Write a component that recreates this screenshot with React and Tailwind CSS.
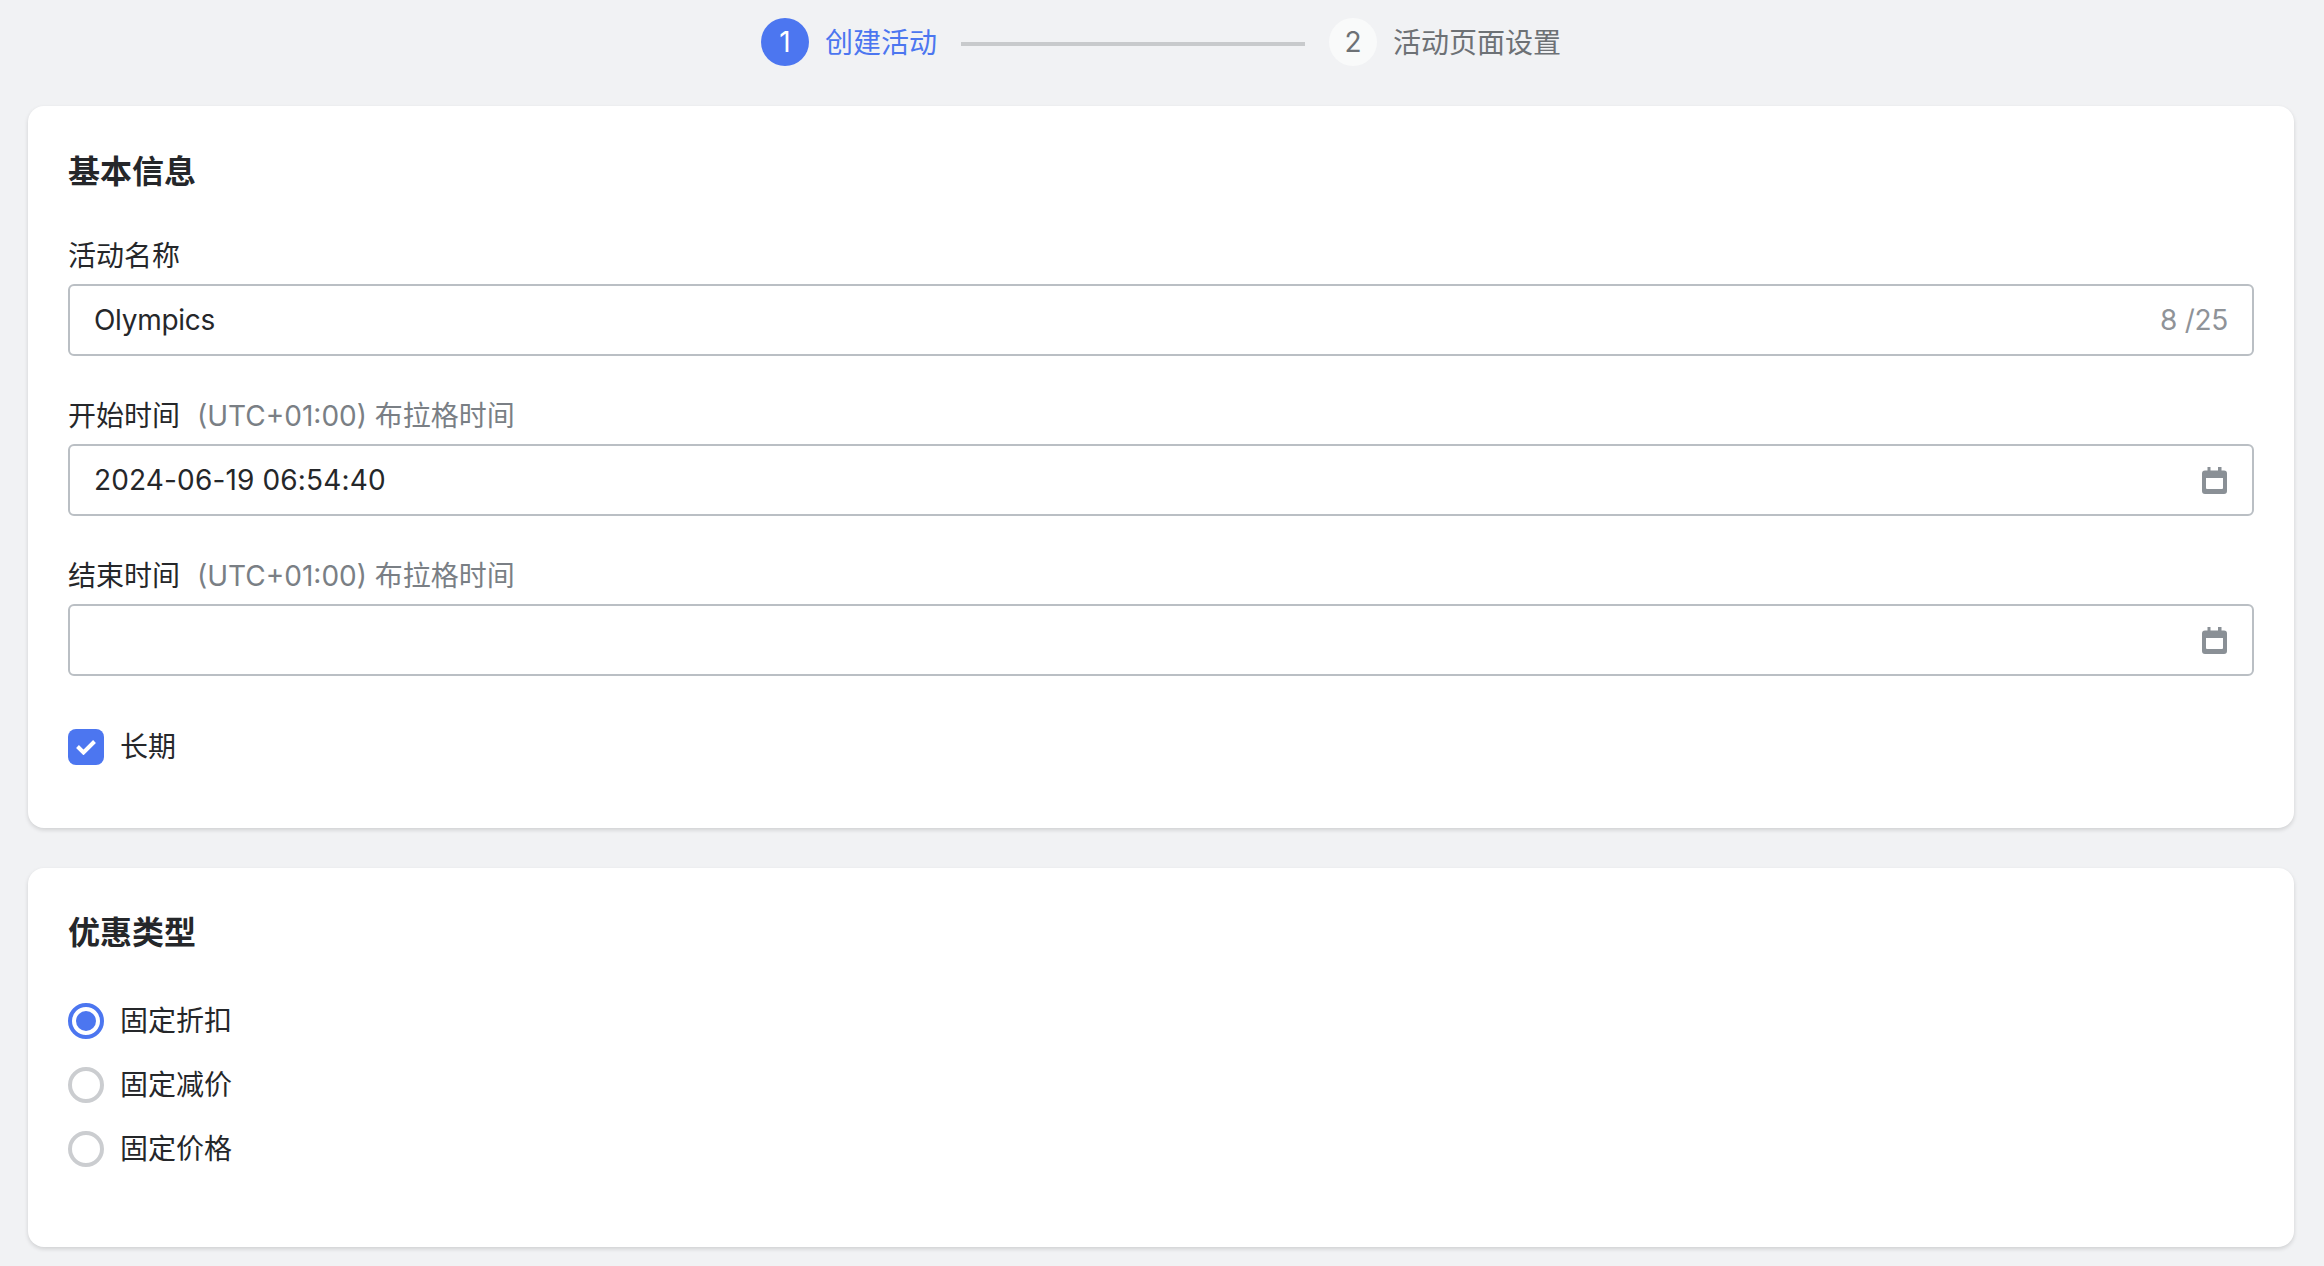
const FONT = "font-['Inter','Noto_Sans_CJK_SC',sans-serif]";

const CalendarIcon = () => (
  <svg width="25" height="27" viewBox="0 0 25 27" className="shrink-0 text-[#8a9096]">
    <path
      fill="currentColor"
      fillRule="evenodd"
      d="M5.5 0h3v3.5H16V0h3.5v3.5H22a3 3 0 0 1 3 3V24a3 3 0 0 1-3 3H3a3 3 0 0 1-3-3V6.5a3 3 0 0 1 3-3h2.5zM4 11v10a1 1 0 0 0 1 1h15a1 1 0 0 0 1-1V11z"
    />
  </svg>
);

const Field = ({ label, hint, value, valueClass, suffix, icon }) => (
  <div className="mb-[40px]">
    <div className="mb-[8px] flex h-[40px] items-center text-[28px] text-[#25272a]">
      <span>{label}</span>
      {hint && <span className="ml-[17px] text-[#7a7f85]">{hint}</span>}
    </div>
    <div className="flex h-[72px] items-center justify-between rounded-[6px] border-2 border-[#babfc4] bg-white pl-[24px] pr-[25px]">
      <span className={`text-[28px] text-[#25272a] ${valueClass}`}>{value}</span>
      {suffix && <span className="-mr-[1px] text-[28px] tracking-[-0.3px] text-[#8f9398]">{suffix}</span>}
      {icon && <span className="ml-auto flex"><CalendarIcon /></span>}
    </div>
  </div>
);

const Radio = ({ label, checked }) => (
  <div className="flex h-[36px] items-center gap-[16px]">
    {checked ? (
      <span className="flex h-[36px] w-[36px] items-center justify-center rounded-full border-4 border-[#4c76f0]">
        <span className="h-[20px] w-[20px] rounded-full bg-[#4c76f0]" />
      </span>
    ) : (
      <span className="h-[36px] w-[36px] rounded-full border-4 border-[#cbcdd0]" />
    )}
    <span className="text-[28px] text-[#25272a]">{label}</span>
  </div>
);

const App = () => {
  return (
    <div className={`min-h-screen overflow-hidden bg-[#f1f2f4] pb-[19px] pl-[28px] pr-[30px] pt-[18px] ${FONT}`}>
      <div className="mb-[40px] flex h-[48px] items-center justify-center">
        <span className="flex h-[48px] w-[48px] items-center justify-center rounded-full bg-[#4c76f0] text-[28px] text-white">1</span>
        <span className="ml-[16px] mt-[2px] text-[28px] text-[#4c76f0]">创建活动</span>
        <span className="mx-[24px] mt-[4px] h-[4px] w-[344px] bg-[#c8cacc]" />
        <span className="flex h-[48px] w-[48px] items-center justify-center rounded-full bg-[#f9fafa] text-[28px] text-[#6d7175]">2</span>
        <span className="ml-[16px] mt-[2px] text-[28px] text-[#6d7175]">活动页面设置</span>
      </div>

      <section className="mb-[40px] h-[722px] rounded-[16px] bg-white px-[40px] pt-[44px] shadow-[0_2px_4px_rgba(0,0,0,0.14)]">
        <h2 className="mb-[42px] h-[44px] text-[32px] font-semibold leading-[44px] text-[#25272a]">基本信息</h2>
        <Field label="活动名称" value="Olympics" valueClass="tracking-[-0.3px]" suffix="8 /25" />
        <Field label="开始时间" hint="(UTC+01:00) 布拉格时间" value="2024-06-19 06:54:40" valueClass="tracking-[0.15px]" icon />
        <Field label="结束时间" hint="(UTC+01:00) 布拉格时间" value="" icon />
        <div className="mt-[53px] flex h-[36px] items-center gap-[16px]">
          <span className="flex h-[36px] w-[36px] items-center justify-center rounded-[8px] bg-[#4c76f0]">
            <svg width="20" height="16" viewBox="0 0 20 16" fill="none" stroke="white" strokeWidth="4">
              <path d="M1.5 7.5l6 6L18.5 2.5" />
            </svg>
          </span>
          <span className="text-[28px] text-[#25272a]">长期</span>
        </div>
      </section>

      <section className="h-[379px] rounded-[16px] bg-white px-[40px] pt-[43px] shadow-[0_2px_4px_rgba(0,0,0,0.14)]">
        <h2 className="mb-[48px] h-[44px] text-[32px] font-semibold leading-[44px] text-[#25272a]">优惠类型</h2>
        <div className="flex flex-col gap-[28px]">
          <Radio label="固定折扣" checked />
          <Radio label="固定减价" />
          <Radio label="固定价格" />
        </div>
      </section>
    </div>
  );
};

export default App;
